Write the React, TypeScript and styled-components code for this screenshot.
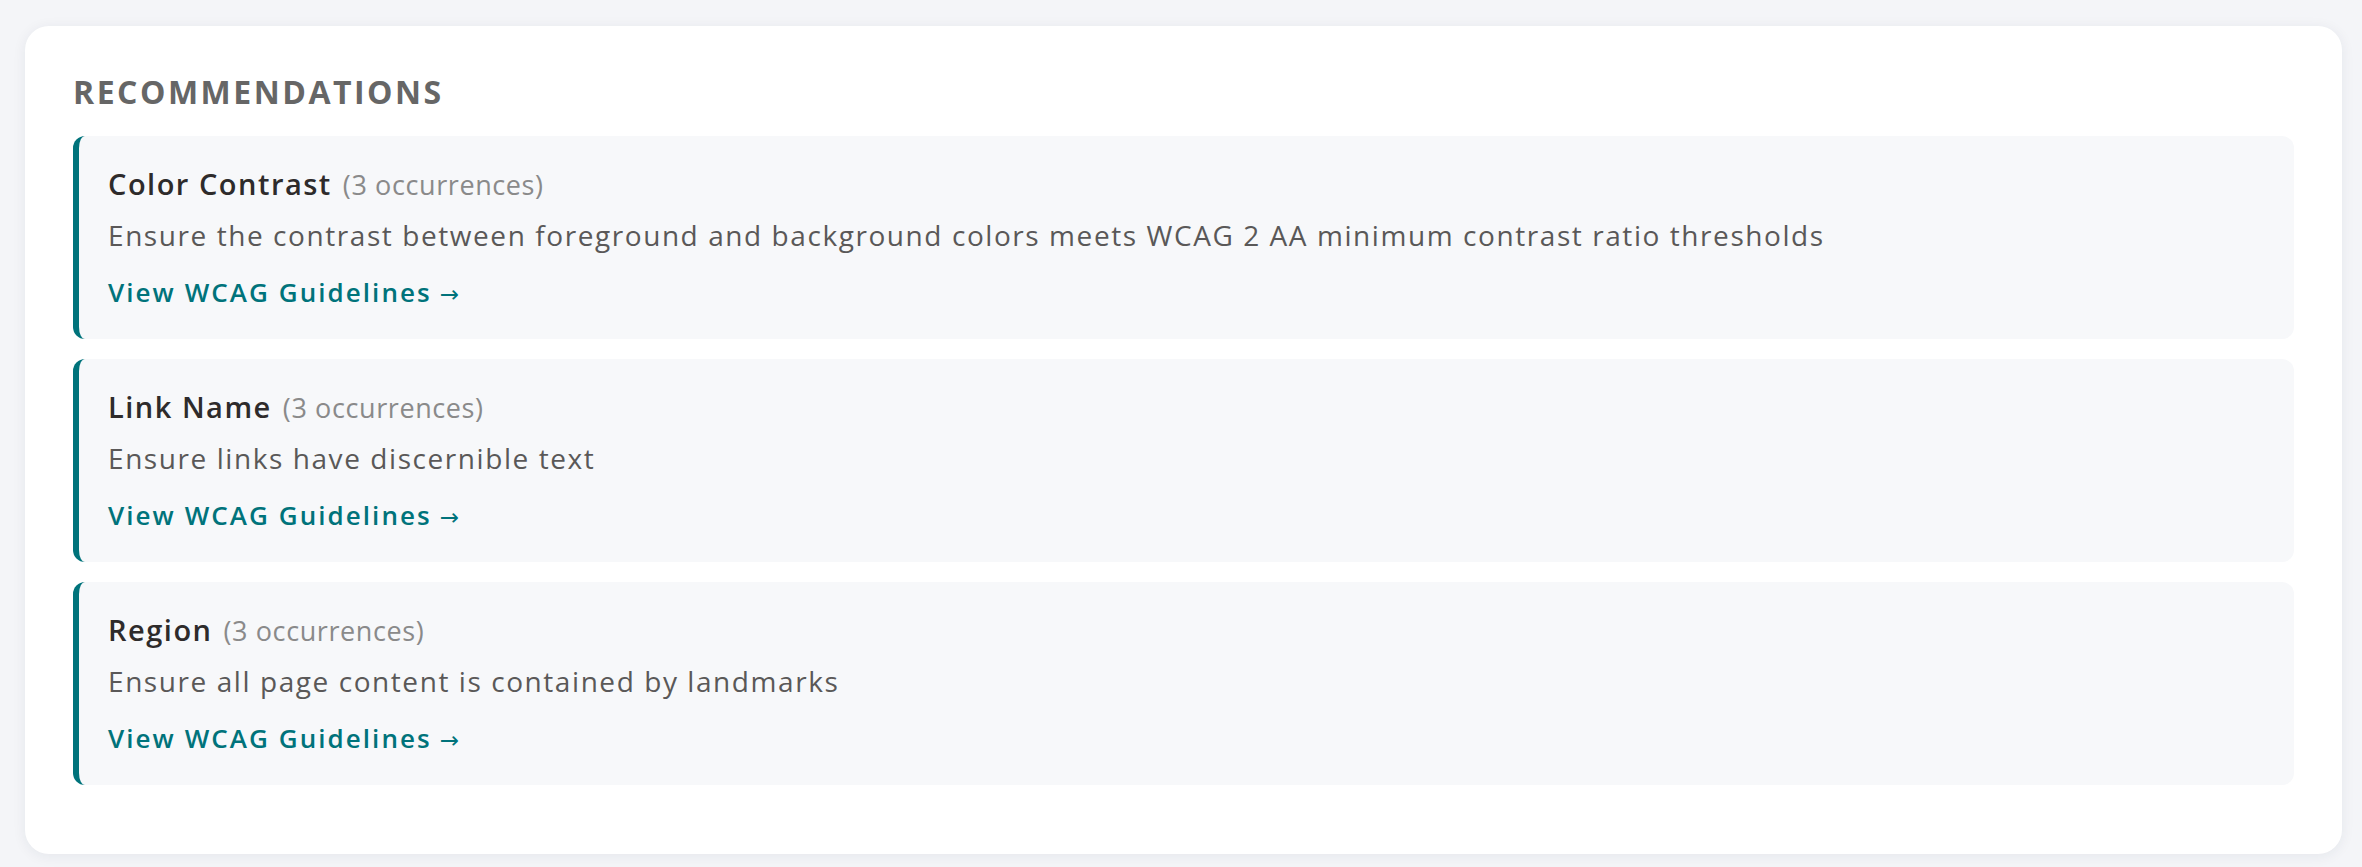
import React from 'react';
import styled, { createGlobalStyle } from 'styled-components';

const GlobalStyle = createGlobalStyle`
  html, body {
    margin: 0;
    padding: 0;
    background: #f4f5f8;
  }
  body {
    font-family: "Open Sans", "Liberation Sans", sans-serif;
  }
`;

interface Recommendation {
    id: string;
    title: string;
    occurrences: number;
    description: string;
    href: string;
}

const recommendations: Recommendation[] = [
    {
        id: 'color-contrast',
        title: 'Color Contrast',
        occurrences: 3,
        description:
            'Ensure the contrast between foreground and background colors meets WCAG 2 AA minimum contrast ratio thresholds',
        href: '#color-contrast',
    },
    {
        id: 'link-name',
        title: 'Link Name',
        occurrences: 3,
        description: 'Ensure links have discernible text',
        href: '#link-name',
    },
    {
        id: 'region',
        title: 'Region',
        occurrences: 3,
        description: 'Ensure all page content is contained by landmarks',
        href: '#region',
    },
];

const Page = styled.div`
padding: 26px 20px 13px 25px;
`;

const Card = styled.section`
background: #ffffff;
border-radius: 24px;
box-shadow: 0 2px 14px rgba(30, 40, 70, 0.07);
padding: 48px 48px 49px 48px;
`;

const Heading = styled.h2`
margin: 0 0 27px 0;
font-size: 32px;
line-height: 35px;
font-weight: 700;
letter-spacing: 2.5px;
color: #666666;
text-transform: uppercase;
`;

const Item = styled.article`
background: #f7f8fa;
border-left: 6px solid #00737b;
border-radius: 12px;
padding: 30px 29px 32px 29px;
margin-bottom: 20px;
`;

const ItemTitle = styled.h3`
margin: 0;
font-size: 29px;
line-height: 36px;
font-weight: 600;
letter-spacing: 1.5px;
color: #2e2b2b;
`;

const Count = styled.span`
margin-left: 11px;
font-size: 27px;
line-height: 1;
font-weight: 400;
letter-spacing: 0.6px;
color: #8a8a8a;
`;

const Description = styled.p`
margin: 15px 0 0 0;
font-size: 28px;
line-height: 36px;
letter-spacing: 1.57px;
color: #5a5858;
`;

const GuideLink = styled.a`
display: inline-block;
margin-top: 24px;
font-size: 26px;
line-height: 30px;
font-weight: 600;
letter-spacing: 2.05px;
color: #00737b;
text-decoration: none;
`;

const Arrow = styled.span`
margin-left: 8px;
font-family: "DejaVu Sans", sans-serif;
font-size: 23px;
line-height: 1;
font-weight: 400;
letter-spacing: 0;
`;

export default function App() {
    return (
        <>
            <GlobalStyle />
            <Page>
                <Card>
                    <Heading>Recommendations</Heading>
                    {recommendations.map((rec) => (
                        <Item key={rec.id}>
                            <ItemTitle>
                                {rec.title}
                                <Count>({rec.occurrences} occurrences)</Count>
                            </ItemTitle>
                            <Description>{rec.description}</Description>
                            <GuideLink href={rec.href}>
                                View WCAG Guidelines<Arrow>→</Arrow>
                            </GuideLink>
                        </Item>
                    ))}
                </Card>
            </Page>
        </>
    );
}
